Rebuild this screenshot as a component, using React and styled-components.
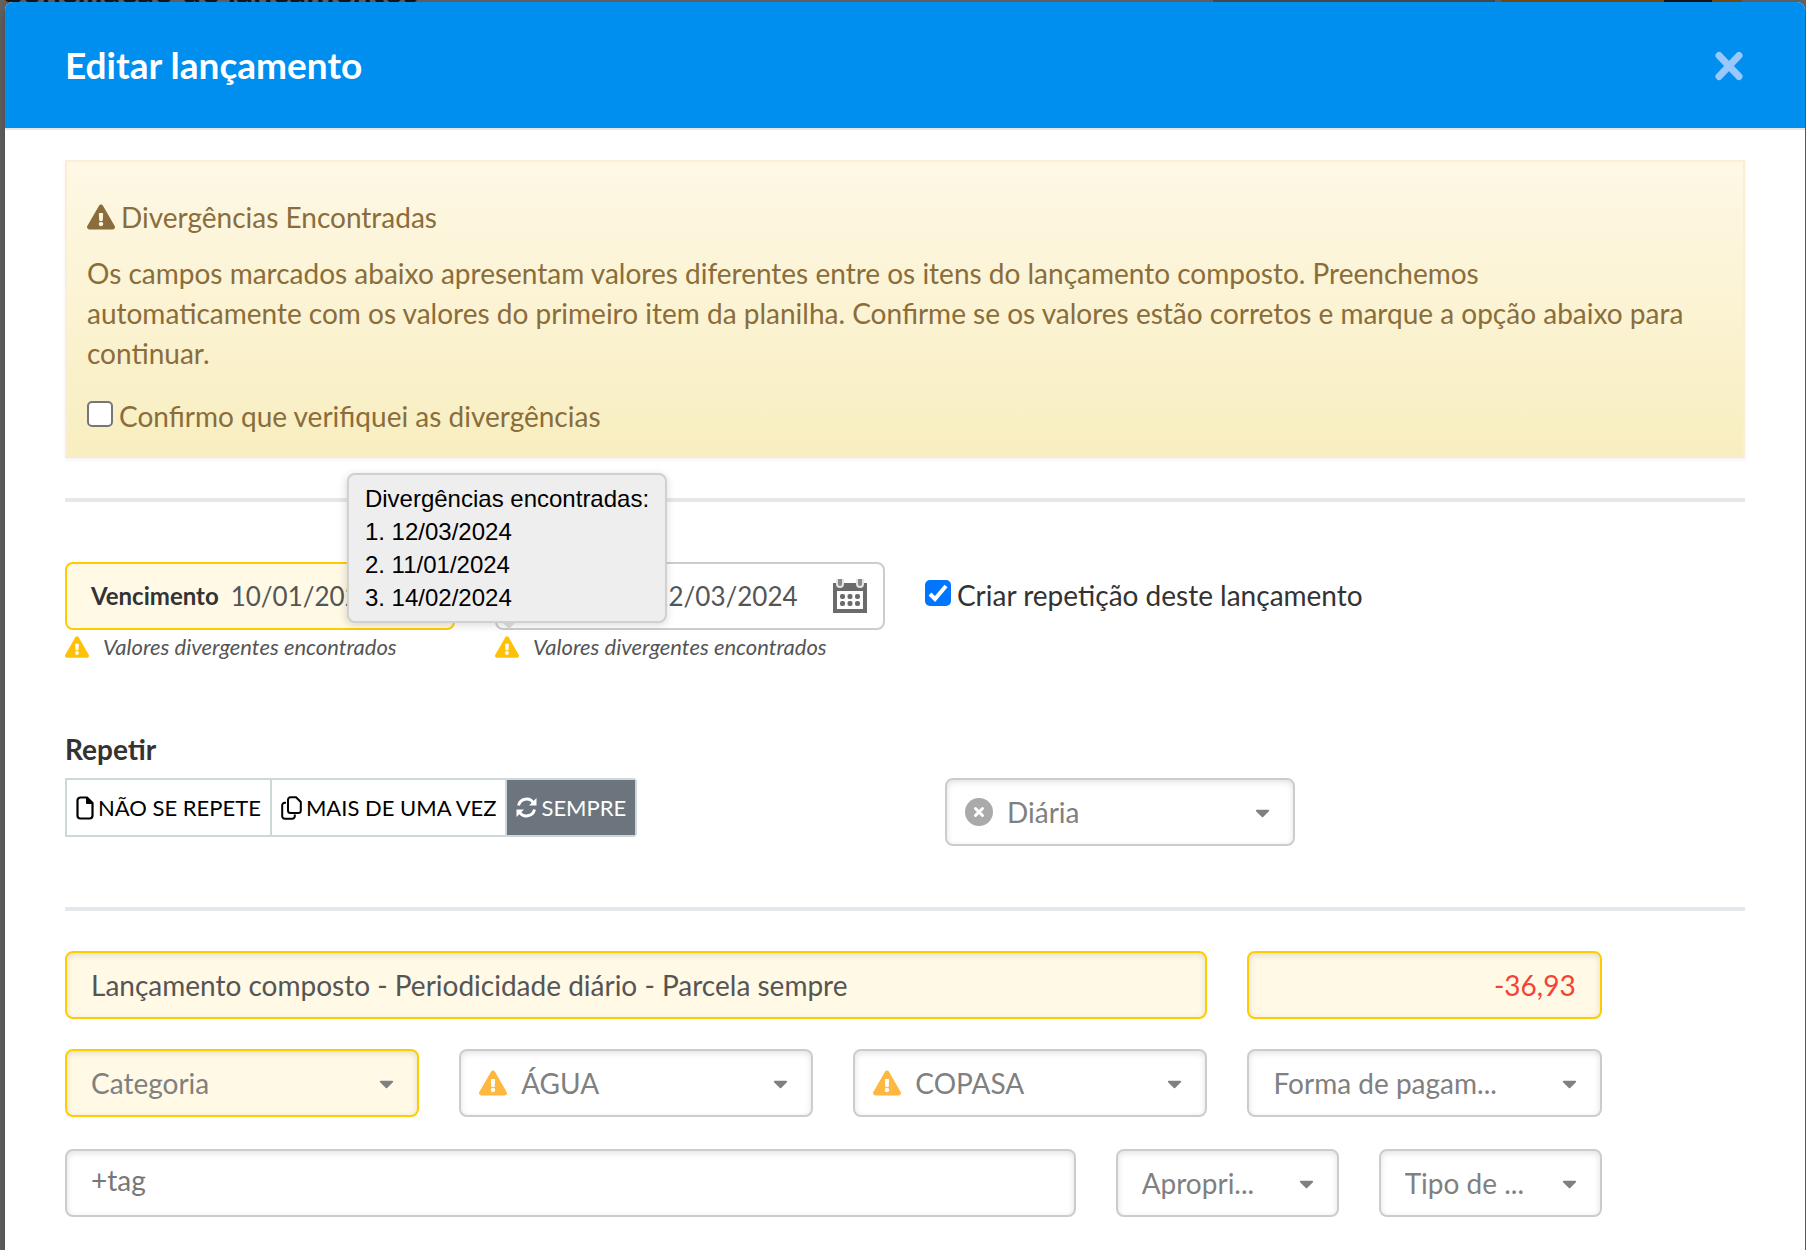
import styled, { createGlobalStyle } from 'styled-components';
import { FaExclamationTriangle, FaCaretDown } from 'react-icons/fa';

const GlobalStyle = createGlobalStyle`
  * {
    box-sizing: border-box;
  }

  body {
    margin: 0;
    background: #656361;
    color: #333;
    font-family: Lato, "Liberation Sans", sans-serif;
    font-size: 28px;
    line-height: 40px;
  }

  button, input, select {
    font: inherit;
    color: inherit;
    margin: 0;
  }
`;

const Page = styled.div`
  position: relative;
  min-height: 100vh;
  padding: 2px 1px 0 5px;
  overflow: hidden;
  display: flex;
`;

const Behind = styled.div`
  position: absolute;
  top: 0;
  left: 0;
  right: 0;
  height: 2px;
  overflow: hidden;
  display: flex;
  justify-content: space-between;
  padding-right: 64px;
`;

const BehindTitle = styled.span`
  margin-top: -30px;
  color: #151515;
  font-size: 34px;
  font-weight: bold;
`;

const BehindButtons = styled.div`
  display: flex;
  gap: 6px;
`;

const BehindButton = styled.span`
  width: ${props => props.$width}px;
  padding-left: 163px;
  background: ${props => props.$color};

  &::after {
    content: "";
    display: ${props => (props.$open ? 'block' : 'none')};
    width: 48px;
    height: 2px;
    background: #151515;
  }
`;

const Modal = styled.div`
  position: relative;
  flex: 1;
  background: white;
  border-radius: 8px 8px 0 0;
  box-shadow: 0 6px 14px rgba(0, 0, 0, 0.3);
`;

const Header = styled.header`
  display: flex;
  align-items: center;
  justify-content: space-between;
  height: 128px;
  padding: 0 62px 0 60px;
  background: #008eef;
  border-bottom: 2px solid #e5e5e5;
  border-radius: 8px 8px 0 0;
`;

const Title = styled.h1`
  margin: 0;
  color: white;
  font-size: 37px;
  line-height: 40px;
`;

const Close = styled.button`
  display: flex;
  padding: 2px 0 0;
  border: 0;
  background: none;
  cursor: pointer;
`;

const Body = styled.form`
  padding: 30px 60px;
`;

const Alert = styled.section`
  padding: 35px 20px 20px;
  border: 2px solid #fbeed5;
  border-bottom-color: #f9ebc6;
  background: linear-gradient(#fef8e5, #f8eec0);
  color: #8a6d3b;
  box-shadow: 0 2px 4px rgba(0, 0, 0, 0.05);
`;

const AlertTitle = styled.h2`
  display: flex;
  align-items: center;
  gap: 6px;
  margin: 0 0 16px;
  font-size: 28px;
  font-weight: normal;
`;

const AlertText = styled.p`
  margin: 0 0 23px;
  padding-right: 30px;
`;

const Check = styled.label`
  display: flex;
  align-items: center;
  gap: 6px;
`;

const CheckBox = styled.input`
  appearance: none;
  width: 26px;
  height: 26px;
  margin-bottom: 5px;
  border: 2px solid #767676;
  border-radius: 5px;
  background: white;

  &:checked {
    border: 0;
    background: #0075ff url("data:image/svg+xml,%3Csvg xmlns='http://www.w3.org/2000/svg' viewBox='0 0 26 26'%3E%3Cpath d='M5 14l5 5L21 6' fill='none' stroke='white' stroke-width='4'/%3E%3C/svg%3E");
  }
`;

const Line = styled.hr`
  height: 4px;
  margin: ${props => props.$top}px 0 ${props => props.$bottom}px;
  border: 0;
  background: #e5e8eb;
`;

const Row = styled.div`
  display: grid;
  grid-template-columns: repeat(12, minmax(0, 1fr));
  column-gap: 40px;
  margin-top: ${props => props.$top || 0}px;
`;

const Cell = styled.div`
  grid-column: span ${props => props.$span};
`;

const RepeatCheck = styled(Cell)`
  padding-top: 13px;
`;

const Fields = styled.div`
  grid-column: span 11;
  display: grid;
  grid-template-columns: repeat(4, minmax(0, 1fr));
  gap: 30px 40px;
`;

const TagRow = styled.div`
  grid-column: 1 / -1;
  display: grid;
  grid-template-columns: minmax(0, 1fr) 223px 223px;
  column-gap: 40px;
  margin-top: 2px;
`;

const Field = styled.label`
  display: flex;
  align-items: center;
  gap: ${props => props.$gap || 12}px;
  grid-column: span ${props => props.$span || 1};
  height: 68px;
  padding: 0 ${props => props.$right || 24}px 0 ${props => props.$left || 24}px;
  border: 2px solid ${props => (props.$warn ? '#ffcc00' : '#ccc')};
  border-radius: 8px;
  background: ${props => (props.$warn ? '#fff9e5' : 'white')};
  box-shadow: ${props => (props.$flat ? 'none' : 'inset 0 2px 6px rgba(0, 0, 0, 0.12)')};
  font-size: ${props => (props.$flat ? '26px' : '28px')};
`;

const FieldName = styled.span`
  font-size: 24px;
  font-weight: bold;
`;

const Input = styled.input`
  flex: 1;
  min-width: 0;
  width: 100%;
  padding: 0;
  border: 0;
  outline: 0;
  background: none;
  color: ${props => props.$color || '#555'};
  text-align: ${props => props.$align || 'left'};

  &::placeholder {
    color: #777;
    opacity: 1;
  }
`;

const TagInput = styled(Input)`
  padding-bottom: 6px;
`;

const Select = styled.select`
  appearance: none;
  flex: 1;
  min-width: 0;
  height: 40px;
  padding: 0;
  border: 0;
  outline: 0;
  background: none;
  color: #808080;
`;

const Note = styled.div`
  display: flex;
  align-items: center;
  gap: 14px;
  height: 34px;
  color: #555;
  font-size: 22px;
  font-style: italic;
`;

const NoteIcon = styled.span`
  position: relative;
  display: flex;
`;

const Tooltip = styled.div`
  position: absolute;
  bottom: 36px;
  left: 50%;
  transform: translateX(-50%);
  padding: 7px 16px;
  border: 2px solid #d0d0d0;
  border-radius: 8px;
  background: #eee;
  box-shadow: 0 2px 8px rgba(0, 0, 0, 0.15);
  color: black;
  font: normal 24px/33px "Liberation Sans", sans-serif;
  white-space: nowrap;

  &::after {
    content: "";
    position: absolute;
    top: 100%;
    left: 50%;
    margin-left: -6px;
    border: 8px solid transparent;
    border-top-color: #d0d0d0;
  }
`;

const GroupLabel = styled.h3`
  margin: 0 0 9px;
  font-size: 28px;
`;

const Group = styled.div`
  display: inline-flex;
  height: 59px;
  border: 2px solid #ccd8da;
  border-radius: 0 4px 4px 0;
`;

const GroupButton = styled.button`
  display: flex;
  align-items: center;
  gap: 4px;
  padding: 0 9px;
  border: 0;
  border-left: ${props => (props.$first ? '0' : '2px solid #ccd8da')};
  background: ${props => (props.$active ? '#6c757d' : 'white')};
  color: ${props => (props.$active ? 'white' : 'black')};
  font-size: 22px;
`;

// sits level with the button group, under its heading
const RepeatBox = styled.div`
  grid-column: 7 / -1;
  margin: 49px 0 0 20px;
  width: 350px;
`;

const FileIcon = () => (
  <svg width="18" height="24" viewBox="0 0 18 24" fill="none" stroke="currentColor" strokeWidth="2.2">
    <path d="M4 1.5h7l5.5 5.5v12.500a3 3 0 0 1-3 3H4.500a3 3 0 0 1-3-3V4.500a3 3 0 0 1 3-3z" />
    <path d="M10.500 1.500V7.500h6z" fill="currentColor" strokeWidth="1" />
  </svg>
);

const CopyIcon = () => (
  <svg width="21" height="24" viewBox="0 0 21 24" fill="none" stroke="currentColor" strokeWidth="2">
    <path d="M9.500 1.200h5.500l4.800 4.800v8.500a2.500 2.500 0 0 1-2.500 2.500H9.500A2.500 2.500 0 0 1 7 14.500V3.700a2.500 2.500 0 0 1 2.500-2.500z" />
    <path d="M5 6.800H3.700a2.500 2.500 0 0 0-2.500 2.500v10.900a2.500 2.500 0 0 0 2.500 2.500h7.600a2.500 2.500 0 0 0 2.500-2.500V18.500" />
  </svg>
);

const SyncIcon = () => (
  <svg width="21" height="21" viewBox="0 0 21 21" fill="none" stroke="currentColor" strokeWidth="3">
    <path d="M2.500 8.500A8.200 8.200 0 0 1 17.500 6M18.500 12.500A8.200 8.200 0 0 1 3.500 15" />
    <path d="M20.500 1v7.500H13zM.5 20v-7.500H8z" fill="currentColor" stroke="none" />
  </svg>
);

const ClearIcon = () => (
  <svg width="28" height="28" viewBox="0 0 28 28">
    <circle cx="14" cy="14" r="14" fill="#aaa" />
    <path d="M10.500 10.500l7 7M17.500 10.500l-7 7" stroke="white" strokeWidth="3" strokeLinecap="round" />
  </svg>
);

const CalendarIcon = () => (
  <svg width="34" height="34" viewBox="0 0 34 34">
    <path fill="#6b6b6b" d="M0 4h34v30H0z" />
    <path fill="white" d="M4 12h26v18H4z" />
    <g fill="#8a8a8a" stroke="#e4e4e4" strokeWidth="2">
      <rect x="4" y="-2" width="6" height="10" rx="3" />
      <rect x="24" y="-2" width="6" height="10" rx="3" />
    </g>
    <g fill="#6b6b6b">
      {[15, 22].map(y => [7, 14.5, 22].map(x => (
        <rect key={`${x}-${y}`} x={x} y={y} width="5" height="5" rx="2" />
      )))}
    </g>
  </svg>
);

const CloseIcon = () => (
  <svg width="28" height="30" viewBox="0 0 28 30" stroke="#99c8fb" strokeWidth="7" strokeLinecap="round">
    <path d="M4 4.500l20 21M24 4.500l-20 21" />
  </svg>
);

const Warning = ({ children }) => (
  <Note>
    <NoteIcon>
      <FaExclamationTriangle size={24} color="#ffc107" />
      {children}
    </NoteIcon>
    Valores divergentes encontrados
  </Note>
);

const SelectField = ({ name, value, icon, warn }) => (
  <Field $warn={warn} $left={icon ? 18 : 24} $right={19} $gap={14}>
    {icon}
    <Select aria-label={name} defaultValue={value}>
      <option>{value}</option>
    </Select>
    <FaCaretDown size={23} color="#808080" />
  </Field>
);

const App = () => (
  <Page>
    <GlobalStyle />
    <Behind aria-hidden="true">
      <BehindTitle>Conciliação de lançamentos</BehindTitle>
      <BehindButtons>
        <BehindButton $width={282} $color="#454c4c" />
        <BehindButton $width={241} $color="#7a4a0c" $open />
      </BehindButtons>
    </Behind>
    <Modal role="dialog" aria-labelledby="title">
      <Header>
        <Title id="title">Editar lançamento</Title>
        <Close type="button" aria-label="Fechar"><CloseIcon /></Close>
      </Header>
      <Body>
        <Alert>
          <AlertTitle><FaExclamationTriangle size={28} /> Divergências Encontradas</AlertTitle>
          <AlertText>
            Os campos marcados abaixo apresentam valores diferentes entre os itens do lançamento composto. Preenchemos
            automaticamente com os valores do primeiro item da planilha. Confirme se os valores estão corretos e marque a opção abaixo para continuar.
          </AlertText>
          <Check><CheckBox type="checkbox" /> Confirmo que verifiquei as divergências</Check>
        </Alert>
        <Line $top={40} $bottom={60} />
        <Row>
          <Cell $span={3}>
            <Field $warn $flat>
              <FieldName>Vencimento</FieldName>
              <Input defaultValue="10/01/2024" />
            </Field>
            <Warning />
          </Cell>
          <Cell $span={3}>
            <Field $flat $right={16}>
              <FieldName>Pagamento</FieldName>
              <Input defaultValue="12/03/2024" />
              <CalendarIcon />
            </Field>
            <Warning>
              <Tooltip role="tooltip">
                Divergências encontradas:<br />
                1. 12/03/2024<br />
                2. 11/01/2024<br />
                3. 14/02/2024
              </Tooltip>
            </Warning>
          </Cell>
          <RepeatCheck $span={6}>
            <Check><CheckBox type="checkbox" defaultChecked /> Criar repetição deste lançamento</Check>
          </RepeatCheck>
        </Row>
        <Row $top={65}>
          <Cell $span={6}>
            <GroupLabel>Repetir</GroupLabel>
            <Group>
              <GroupButton type="button" $first><FileIcon />NÃO SE REPETE</GroupButton>
              <GroupButton type="button"><CopyIcon />MAIS DE UMA VEZ</GroupButton>
              <GroupButton type="button" $active><SyncIcon />SEMPRE</GroupButton>
            </Group>
          </Cell>
          <RepeatBox>
            <SelectField name="Periodicidade" value="Diária" icon={<ClearIcon />} />
          </RepeatBox>
        </Row>
        <Line $top={61} $bottom={40} />
        <Row>
          <Fields>
            <Field $warn $span={3}>
              <Input aria-label="Descrição" defaultValue="Lançamento composto - Periodicidade diário - Parcela sempre" />
            </Field>
            <Field $warn>
              <Input aria-label="Valor" $color="#f44336" $align="right" defaultValue="-36,93" />
            </Field>
            <SelectField name="Categoria" value="Categoria" warn />
            <SelectField name="Centro de custo" value="ÁGUA" icon={<FaExclamationTriangle size={28} color="#ffb83f" />} />
            <SelectField name="Fornecedor" value="COPASA" icon={<FaExclamationTriangle size={28} color="#ffb83f" />} />
            <SelectField name="Forma de pagamento" value="Forma de pagam..." />
            <TagRow>
              <Field>
                <TagInput aria-label="Tags" placeholder="+tag" />
              </Field>
              <SelectField name="Apropriação" value="Apropri..." />
              <SelectField name="Tipo de documento" value="Tipo de ..." />
            </TagRow>
          </Fields>
        </Row>
      </Body>
    </Modal>
  </Page>
);

export default App;
